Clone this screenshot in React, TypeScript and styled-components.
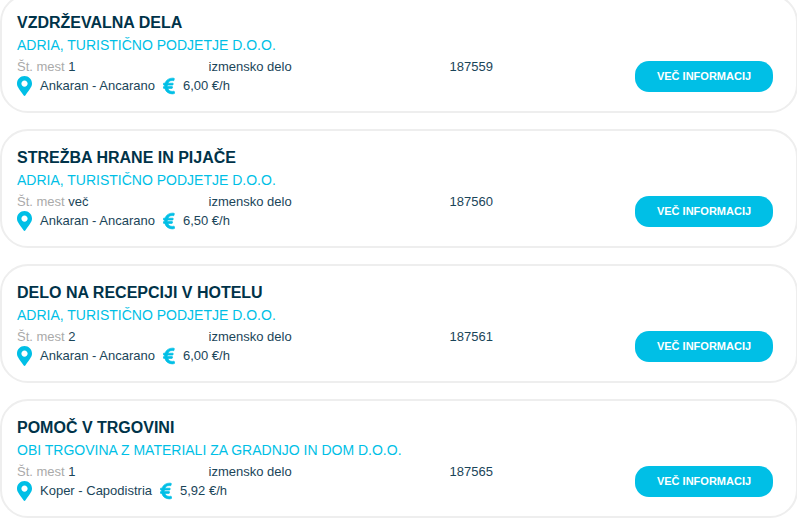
import React from "react";
import styled, { createGlobalStyle } from "styled-components";
import { FaEuroSign } from "react-icons/fa";

const GlobalStyle = createGlobalStyle`
  * { box-sizing: border-box; }
  html { overflow: hidden; }
  body {
    margin: 0;
    background: #fff;
    color: #003349;
    font-family: "Liberation Sans", Arial, sans-serif;
  }
`;

const JobList = styled.main`
  display: flex;
  flex-direction: column;
  gap: 16px;
  margin-top: -6px;
  margin-right: -1px;
`;

const Card = styled.article`
  display: grid;
  grid-template-columns: 1fr 138px;
  padding: 15px 23px 16px 15px;
  border: 2px solid #eee;
  border-radius: 28px;
`;

const Title = styled.h2`
  margin: 0;
  font-size: 16px;
  line-height: 24px;
  font-weight: 700;
`;

const Company = styled.p`
  margin: 0;
  font-size: 14px;
  line-height: 20px;
  color: #00bfe6;
`;

const Facts = styled.div`
  display: grid;
  grid-template-columns: 31fr 39fr 30fr;
  padding-top: 2px;
  font-size: 13px;
  line-height: 20px;
  color: #1a4559;
`;

const Muted = styled.span`
  color: #aaa;
`;

const Place = styled.div`
  display: flex;
  align-items: center;
  gap: 8px;
  height: 18px;
  font-size: 13px;
  line-height: 18px;
  color: #1a4559;
`;

const EuroIcon = styled(FaEuroSign)`
  width: 12px;
  height: 18px;
  color: #00bfe6;
  stroke: currentColor;
  stroke-width: 20;
`;

const More = styled.button`
  align-self: end;
  height: 31px;
  margin-bottom: 3px;
  padding: 0 0 1px;
  border: 0;
  border-radius: 14px;
  background: #00bfe6;
  color: #fff;
  font: 700 11px/16px "Liberation Sans", Arial, sans-serif;
  text-transform: uppercase;
  cursor: pointer;
`;

const Pin = () => (
  <svg width="15" height="20" viewBox="0 0 384 512" fill="#00bfe6" aria-hidden="true">
    <path d="M172.3 501.7C27 291 0 269.4 0 192 0 86 86 0 192 0s192 86 192 192c0 77.400-27 99-172.300 309.700-9.500 13.800-29.900 13.800-39.400 0zM192 272c44.200 0 80-35.800 80-80s-35.800-80-80-80-80 35.800-80 80 35.800 80 80 80z" />
  </svg>
);

type Job = { id: string; title: string; company: string; seats: string; place: string; pay: string };

const jobs: Job[] = [
  { id: "187559", title: "VZDRŽEVALNA DELA", company: "ADRIA, TURISTIČNO PODJETJE D.O.O.", seats: "1", place: "Ankaran - Ancarano", pay: "6,00 €/h" },
  { id: "187560", title: "STREŽBA HRANE IN PIJAČE", company: "ADRIA, TURISTIČNO PODJETJE D.O.O.", seats: "več", place: "Ankaran - Ancarano", pay: "6,50 €/h" },
  { id: "187561", title: "DELO NA RECEPCIJI V HOTELU", company: "ADRIA, TURISTIČNO PODJETJE D.O.O.", seats: "2", place: "Ankaran - Ancarano", pay: "6,00 €/h" },
  { id: "187565", title: "POMOČ V TRGOVINI", company: "OBI TRGOVINA Z MATERIALI ZA GRADNJO IN DOM D.O.O.", seats: "1", place: "Koper - Capodistria", pay: "5,92 €/h" },
];

export default function App() {
  return (
    <>
      <GlobalStyle />
      <JobList>
        {jobs.map((job) => (
          <Card key={job.id}>
            <div>
              <Title>{job.title}</Title>
              <Company>{job.company}</Company>
              <Facts>
                <span><Muted>Št. mest</Muted> {job.seats}</span>
                <span>izmensko delo</span>
                <span>{job.id}</span>
              </Facts>
              <Place>
                <Pin />
                <span>{job.place}</span>
                <EuroIcon aria-hidden="true" />
                <span>{job.pay}</span>
              </Place>
            </div>
            <More type="button">Več informacij</More>
          </Card>
        ))}
      </JobList>
    </>
  );
}
